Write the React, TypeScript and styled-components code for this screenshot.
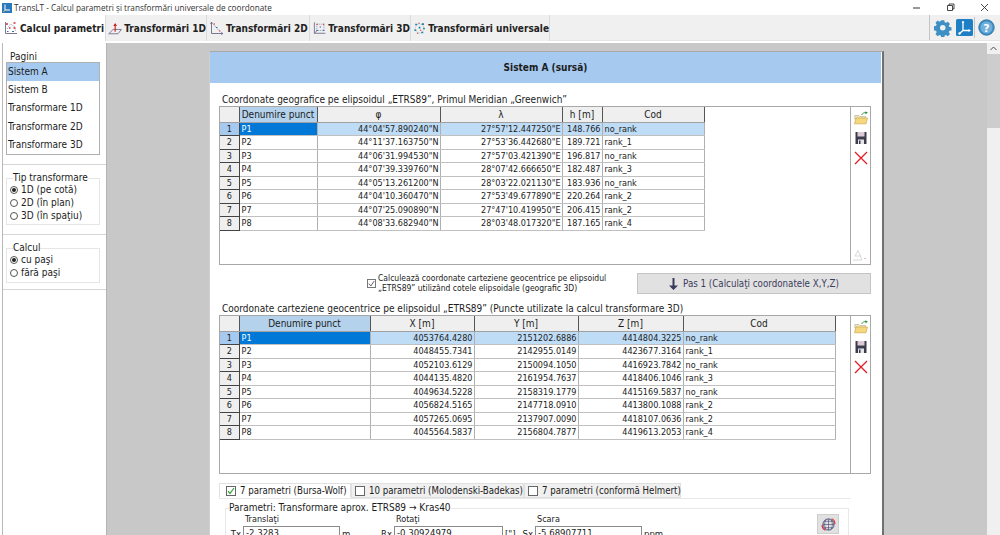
import React from "react";
import styled, { createGlobalStyle } from "styled-components";

const Global = createGlobalStyle`
  html, body { margin: 0; padding: 0; height: 535px; overflow: hidden; background: #fff; }
  #root { height: 535px; }
  * { box-sizing: border-box; }
  body { font-family: "DejaVu Sans Condensed", "DejaVu Sans", sans-serif; font-size: 10px; color: #1c1c1c; }
`;

const Window = styled.div`width: 1000px; height: 535px; display: flex; flex-direction: column; overflow: hidden;`;
const TitleBar = styled.div`height: 15px; flex: none; display: flex; align-items: center; padding-left: 2px; gap: 2px; background: #fff;`;
const TitleText = styled.span`font-family: "Open Sans", sans-serif; font-size: 8.2px; color: #333; flex: 1; white-space: nowrap;`;
const WinBtn = styled.span`width: 32px; height: 15px; display: flex; align-items: center; justify-content: center;`;
const Toolbar = styled.div`height: 26px; flex: none; display: flex; background: #f0f0f0; border-bottom: 1px solid #e4e4e4;`;
const Tab = styled.div<{ $active?: boolean; $w: number }>`
  width: ${p => p.$w}px; height: 26px; flex: none; display: flex; align-items: center; gap: 2px;
  padding-left: ${p => (p.$active ? 3 : 2)}px; white-space: nowrap; font-weight: 700; font-size: 10px; color: #222;
  background: ${p => (p.$active ? "#fff" : "#f0f0f0")}; border-right: 1px solid #dcdcdc;
`;
const ToolSpacer = styled.div`flex: 1;`;
const ToolIcons = styled.div`
  width: 71px; border-left: 1px solid #c4c4c4; display: flex; align-items: center; padding-left: 4px;
  & > svg:first-child { margin-right: 4px; }
`;
const ToolDivider = styled.span`width: 1px; height: 21px; margin: 0 3px 0 1px; background: #c4c4c4;`;
const Body = styled.div`flex: 1; display: flex; min-height: 0; border-top: 2px solid #fff;`;
const Sidebar = styled.aside`width: 107px; flex: none; padding-left: 2px; background: #fff; border-right: 1px solid #b4b4b4; display: flex;`;
const SideInner = styled.div`flex: 1; border-left: 1px solid #b8b8b8; display: flex; flex-direction: column;`;
const SideSection = styled.div<{ $h: number; $top: number }>`height: ${p => p.$h}px; padding: ${p => p.$top}px 6px 0 3px; border-bottom: 1px solid #d6d6d6;`;
const SideLegend = styled.div`padding-left: 4px; line-height: 11px; height: 11px; background: #fff;`;
const ListBox = styled.div`width: 94px; height: 93px; border: 1px solid #b0b0b0; display: flex; flex-direction: column;`;
const ListItem = styled.div<{ $sel?: boolean }>`height: 18.3px; line-height: 18px; padding-left: 1px; background: ${p => (p.$sel ? "#a6c9ef" : "#fff")};`;
const Field = styled.fieldset<{ $h: number }>`width: 94px; height: ${p => p.$h}px; margin: 0; padding: 0 0 0 3px; border: 1px solid #e6e6e6;`;
const FieldLegend = styled.legend`padding: 0; margin-left: 3px; line-height: 10px;`;
const RadioRow = styled.div`height: 13px; display: flex; align-items: center; gap: 3px; white-space: nowrap;`;
const Radio = styled.span<{ $on?: boolean }>`
  width: 8px; height: 8px; border-radius: 50%; border: 1px solid #555; background: #fff; display: flex; align-items: center; justify-content: center; flex: none;
  &::after { content: ""; width: 4px; height: 4px; border-radius: 50%; background: ${p => (p.$on ? "#222" : "transparent")}; }
`;
const Main = styled.main`flex: 1; background: #c8c8c8; padding: 8px 0 0 102px; overflow: hidden;`;
const Card = styled.div`width: 675px; height: 600px; background: #fff; border-top: 1px solid #a8a8a8; border-right: 2px solid #707070; border-left: 1px solid #d0d0d0;`;
const CardHead = styled.div`height: 31px; margin-right: 1px; background: #a6c9ef; display: flex; align-items: center; justify-content: center; font-weight: 700;`;
const CardBody = styled.div`padding: 11px 0 0 9px;`;
const SectionTitle = styled.div`height: 12px; line-height: 12px; padding-left: 3px; white-space: nowrap;`;
const GridBox = styled.div`width: 652px; height: 159px; border: 1px solid #a8a8a8; display: flex;`;
const GridArea = styled.div`width: 631px; border-right: 1px solid #a8a8a8;`;
const GridTools = styled.div`flex: 1; display: flex; flex-direction: column; align-items: center; padding-top: 4px; gap: 6px; position: relative;`;
const GhostIcon = styled.span`position: absolute; bottom: 0; left: 1px;`;
const Table = styled.table`border-collapse: collapse; table-layout: fixed;`;
const Th = styled.th<{ $w: number; $sel?: boolean }>`
  width: ${p => p.$w}px; height: 15px; padding: 0; font-weight: 400; text-align: center; font-size: 10px;
  background: ${p => (p.$sel ? "#b4d2ec" : "#efefef")}; border-right: 1px solid #555; border-bottom: 1px solid #a0a0a0;
`;
const RowHead = styled.td<{ $sel?: boolean }>`
  height: 13.5px; padding: 0; text-align: center; font-size: 9px; background: ${p => (p.$sel ? "#a6c9ef" : "#efefef")};
  border-right: 1px solid #444; border-bottom: 1px solid #444;
`;
const Td = styled.td<{ $right?: boolean; $sel?: boolean; $focus?: boolean }>`
  height: 13.5px; padding: ${p => (p.$right ? "0 1px 0 0" : "0 0 0 2px")}; text-align: ${p => (p.$right ? "right" : "left")}; font-size: 9px; white-space: nowrap; overflow: hidden;
  line-height: 12px; color: ${p => (p.$focus ? "#fff" : "#222")};
  background: ${p => (p.$focus ? "#0078d7" : p.$sel ? "#bedcf6" : "#fff")};
  border-right: 1px solid #b0b0b0; border-bottom: 1px solid #c0c0c0;
`;
const StepRow = styled.div`height: 38px; display: flex; padding-top: 8px; width: 652px;`;
const CheckWrap = styled.div`margin-left: 148px; width: 270px; display: flex; align-items: center; gap: 2px; height: 20px;`;
const Check = styled.span`width: 9px; height: 9px; border: 1px solid #777; flex: none; display: flex; align-items: center; justify-content: center; background: #fff;`;
const CheckLabel = styled.div`font-size: 8.5px; line-height: 10px; white-space: nowrap;`;
const StepBtn = styled.div`width: 234px; height: 21px; background: #e1e1e1; border: 1px solid #c4c4c4; display: flex; align-items: center; justify-content: center; gap: 5px; color: #3c3c5c; font-size: 9.7px;`;
const TabStrip = styled.div`display: flex; align-items: flex-end; height: 14px; margin-top: 10px; position: relative; z-index: 1;`;
const ParamTab = styled.div<{ $w: number; $active?: boolean }>`
  width: ${p => p.$w}px; height: 15px; display: flex; align-items: center; gap: 4px; padding-left: ${p => (p.$active ? 6 : 3)}px; white-space: nowrap; font-size: 9.6px;
  background: ${p => (p.$active ? "#fff" : "#f0f0f0")}; border: 1px solid #e0e0e0; ${p => p.$active && "border-bottom-color:#fff;"}
`;
const TabCheck = styled.span`width: 10px; height: 10px; border: 1px solid #666; background: #fff; display: flex; align-items: center; justify-content: center; flex: none;`;
const ParamPanel = styled.div`width: 632px; padding: 4px 0 0 6px; border-top: 1px solid #e8e8e8;`;
const ParamField = styled.fieldset`margin: 0; width: 624px; height: 60px; padding: 0; border: 1px solid #e8e8e8; position: relative;`;
const ParamLegend = styled.legend`margin-left: 3px; padding: 0; line-height: 10px;`;
const ParamCols = styled.div`display: grid; grid-template-columns: 150px 140px 1fr; padding-left: 5px;`;
const ParamCol = styled.div<{ $pad: number }>`padding-left: ${p => p.$pad}px;`;
const ParamCap = styled.div`font-size: 9px; line-height: 11px; height: 13px; padding-left: 2px; padding-top: 1px;`;
const ParamRow = styled.div`display: flex; align-items: center; gap: 2px; margin-left: -14px; white-space: nowrap; font-size: 9.5px;`;
const ParamInput = styled.div<{ $w: number }>`width: ${p => p.$w}px; height: 14px; border: 1px solid #8a8a8a; padding-left: 2px; line-height: 12px; background: #fff;`;
const ParamName = styled.span`width: 12px; text-align: right;`;
const GlobeBtn = styled.div`position: absolute; right: 9px; top: 1px; width: 22px; height: 20px; background: #e1e1e1; border: 1px solid #cfcfcf; display: flex; align-items: center; justify-content: center;`;
const Scroll = styled.div`width: 13px; flex: none; background: #f0f0f0; display: flex; flex-direction: column; align-items: center;`;
const ScrollArrow = styled.div`height: 11px; display: flex; align-items: center; justify-content: center;`;
const ScrollThumb = styled.div`width: 13px; height: 74px; background: #cdcdcd;`;

const CoordIcon = ({ kind }: { kind: number }) => (
  <svg width="15" height="15" viewBox="0 0 15 15" fill="none">
    {kind === 1 ? (
      <g>
        <path d="M.8 13h9.700l3.500-4.500H5.300z" stroke="#6a6a8a" strokeWidth=".9" />
        <path d="M7.500 11V2.500" stroke="#d02020" strokeWidth="1.200" />
        <path d="M5.500 5 7.500 2l2 3z" fill="#d02020" />
      </g>
    ) : kind === 4 ? (
      <g>
        <circle cx="7.500" cy="7.500" r="5" stroke="#9ab8c8" strokeWidth=".8" strokeDasharray="1.500 1" />
        <path d="M2.500 3h2.200M10 2.500h2.500M1.500 9.500h2.200M9.500 12h2.200M6.500 6.500h2M11.500 7.500h2" stroke="#1f7fa8" strokeWidth="1.800" />
        <path d="M6 1.500h1.500M4.500 13h1.500M8 9.500h1.500" stroke="#d03030" strokeWidth="1.200" />
      </g>
    ) : kind === 0 ? (
      <g>
        <path d="M2.500 1v11.500H14" stroke="#6a6a8a" strokeWidth=".9" />
        <path d="M4 8 7.500 3l4 2.500 1 4.500" stroke="#8a90b8" strokeWidth=".8" strokeDasharray="1.300 .8" />
        <path d="M3 3h2M6 7h1.500M10.500 2h2M10.500 7h2" stroke="#d83030" strokeWidth="1.300" />
        <path d="M4 10.500h1.500M9 10.500h2" stroke="#3a6ab0" strokeWidth="1.100" />
      </g>
    ) : kind === 2 ? (
      <g>
        <path d="M2.500 1v11.500H14" stroke="#6a6a8a" strokeWidth=".9" />
        <path d="M1.400 3 2.500 1l1.100 2M12 11.400l2 1.100-2 1.100" stroke="#6a6a8a" strokeWidth=".7" />
        <path d="M4.500 3.500 10.500 10" stroke="#8a90b8" strokeWidth=".8" strokeDasharray="1.300 .8" />
        <path d="M4.500 3h1.500M10 10h1.500" stroke="#d83030" strokeWidth="1.200" />
        <path d="M7 6.500h1.500" stroke="#3a6ab0" strokeWidth="1.100" />
      </g>
    ) : (
      <g>
        <path d="M2.500 1v11.500H14M2.500 12.500 5.500 9.500" stroke="#6a6a8a" strokeWidth=".9" />
        <path d="M5 3h7.500v6.500H5z" stroke="#8a90b8" strokeWidth=".8" strokeDasharray="1.300 .8" />
        <path d="M4.500 3h1.500M11.500 3h1.500" stroke="#d83030" strokeWidth="1.200" />
        <path d="M4.500 9.500h1.500M11.500 9.500h1.500M8 6h1.500" stroke="#3a6ab0" strokeWidth="1.100" />
      </g>
    )}
  </svg>
);

const OpenIcon = () => (
  <svg width="14" height="14" viewBox="0 0 14 14">
    <path d="M.8 4.500h4.200l1 1h5.500v2.500H.8z" fill="#e8e4c8" stroke="#b0a060" strokeWidth=".5" />
    <path d="M.5 12.800 2 7h11.500l-1.500 5.800z" fill="#f5d77e" stroke="#c9a040" strokeWidth=".6" />
    <path d="M7.500 4c1.300-2 3-2.800 4.500-2.300" fill="none" stroke="#2f8a3a" strokeWidth=".9" />
    <path d="M11.500 .3l2.300 1.500-2.300 1.400z" fill="#1e8a2e" />
  </svg>
);
const SaveIcon = () => (
  <svg width="14" height="14" viewBox="0 0 14 14">
    <path d="M1.500 1h11v12h-11z" fill="#3c3c4c" />
    <rect x="3.500" y="1" width="7" height="4.500" fill="#dccbd6" />
    <rect x="4" y="8.500" width="6" height="4.500" fill="#e6e6ea" />
    <rect x="5" y="9.500" width="1.500" height="3.500" fill="#3c3c4c" />
  </svg>
);
const DeleteIcon = () => (
  <svg width="14" height="14" viewBox="0 0 14 14">
    <path d="M1 1 13 13M13 1 1 13" stroke="#e01c24" strokeWidth="1.300" />
  </svg>
);

const geo = [
  ["P1", "44°04'57.890240\"N", "27°57'12.447250\"E", "148.766", "no_rank"],
  ["P2", "44°11'37.163750\"N", "27°53'36.442680\"E", "189.721", "rank_1"],
  ["P3", "44°06'31.994530\"N", "27°57'03.421390\"E", "196.817", "no_rank"],
  ["P4", "44°07'39.339760\"N", "28°07'42.666650\"E", "182.487", "rank_3"],
  ["P5", "44°05'13.261200\"N", "28°03'22.021130\"E", "183.936", "no_rank"],
  ["P6", "44°04'10.360470\"N", "27°53'49.677890\"E", "220.264", "rank_2"],
  ["P7", "44°07'25.090890\"N", "27°47'10.419950\"E", "206.415", "rank_2"],
  ["P8", "44°08'33.682940\"N", "28°03'48.017320\"E", "187.165", "rank_4"],
];
const xyz = [
  ["P1", "4053764.4280", "2151202.6886", "4414804.3225", "no_rank"],
  ["P2", "4048455.7341", "2142955.0149", "4423677.3164", "rank_1"],
  ["P3", "4052103.6129", "2150094.1050", "4416923.7842", "no_rank"],
  ["P4", "4044135.4820", "2161954.7637", "4418406.1046", "rank_3"],
  ["P5", "4049634.5228", "2158319.1779", "4415169.5837", "no_rank"],
  ["P6", "4056824.5165", "2147718.0910", "4413800.1088", "rank_2"],
  ["P7", "4057265.0695", "2137907.0090", "4418107.0636", "rank_2"],
  ["P8", "4045564.5837", "2156804.7877", "4419613.2053", "rank_4"],
];

const DataGrid = ({ cols, rows }: { cols: { t: string; w: number }[]; rows: string[][] }) => (
  <Table>
    <thead>
      <tr>
        <Th $w={19} />
        {cols.map((c, i) => (
          <Th key={c.t} $w={c.w} $sel={i === 0}>{c.t}</Th>
        ))}
      </tr>
    </thead>
    <tbody>
      {rows.map((r, ri) => (
        <tr key={r[0]}>
          <RowHead $sel={ri === 0}>{ri + 1}</RowHead>
          {r.map((v, ci) => (
            <Td key={ci} $right={ci > 0 && ci < r.length - 1} $sel={ri === 0} $focus={ri === 0 && ci === 0}>{v}</Td>
          ))}
        </tr>
      ))}
    </tbody>
  </Table>
);

const Tools = ({ ghost }: { ghost?: boolean }) => (
  <GridTools>
    <OpenIcon />
    <SaveIcon />
    <DeleteIcon />
    {ghost && (
      <GhostIcon>
        <svg width="16" height="14" viewBox="0 0 16 14" fill="none">
          <path d="M1 12h9L6 2.500 3 8h6" stroke="#cfcfcf" strokeWidth=".8" />
          <path d="M12.500 10.500h1" stroke="#d08080" strokeWidth="1" />
        </svg>
      </GhostIcon>
    )}
  </GridTools>
);

const TabCheckMark = () => (
  <svg width="8" height="8" viewBox="0 0 8 8" fill="none"><path d="M1 4.200 3 6.500 7 1" stroke="#2f9e3a" strokeWidth="1.200" /></svg>
);

export default function App() {
  return (
    <Window>
      <Global />
      <TitleBar>
        <svg width="10" height="10" viewBox="0 0 10 10">
          <rect width="10" height="10" fill="#2a78bc" />
          <path d="M3 1.500v5.500h5" stroke="#fff" strokeWidth="1" fill="none" />
          <path d="M3 7 1.500 9" stroke="#f0c040" strokeWidth="1" />
        </svg>
        <TitleText>TransLT - Calcul parametri și transformări universale de coordonate</TitleText>
        <WinBtn><svg width="8" height="8"><path d="M1 4h7" stroke="#333" strokeWidth="1" /></svg></WinBtn>
        <WinBtn><svg width="9" height="9" fill="none"><path d="M1.500 2.500h5v5h-5zM3 2.500V1h5v5H6.500" stroke="#333" strokeWidth=".9" /></svg></WinBtn>
        <WinBtn><svg width="9" height="9"><path d="M1 1l7 7M8 1l-7 7" stroke="#333" strokeWidth=".9" /></svg></WinBtn>
      </TitleBar>
      <Toolbar>
        <Tab $active $w={106}><CoordIcon kind={0} />Calcul parametri</Tab>
        <Tab $w={101}><CoordIcon kind={1} />Transformări 1D</Tab>
        <Tab $w={103}><CoordIcon kind={2} />Transformări 2D</Tab>
        <Tab $w={101}><CoordIcon kind={3} />Transformări 3D</Tab>
        <Tab $w={139}><CoordIcon kind={4} />Transformări universale</Tab>
        <ToolSpacer />
        <ToolIcons>
          <svg width="18" height="18" viewBox="0 0 18 18">
            <path fill="#3d8fc4" fillRule="evenodd" d="M7.300.8h3.400l.4 2.300 1.500.6 1.900-1.300 2.400 2.400-1.300 1.900.6 1.500 2.300.4v3.400l-2.300.4-.6 1.500 1.300 1.900-2.400 2.400-1.900-1.300-1.500.6-.4 2.300H7.300l-.4-2.300-1.500-.6-1.900 1.300-2.400-2.400 1.300-1.900-.6-1.500-2.300-.4V7.300l2.300-.4.600-1.500L1.100 3.500l2.400-2.400 1.900 1.300 1.500-.6zM9 6a3 3 0 1 0 0 6 3 3 0 0 0 0-6z" transform="scale(.92) translate(.5 .5)" />
          </svg>
          <svg width="17" height="17" viewBox="0 0 17 17">
            <rect width="17" height="17" rx="1.500" fill="#1f7fc4" />
            <path d="M7 2v9.500h6.500M7 11.500 3.500 14.500" stroke="#fff" strokeWidth="1.300" fill="none" />
            <path d="M5.700 4 7 2l1.300 2zM12.500 10l2.500 1.500-2.500 1.500z" fill="#fff" />
            <circle cx="3.500" cy="14.500" r="1.200" fill="#fff" />
          </svg>
          <ToolDivider />
          <svg width="17" height="17" viewBox="0 0 17 17">
            <circle cx="8.500" cy="8.500" r="7.700" fill="#3f90c8" stroke="#2a6f9e" strokeWidth=".9" />
            <circle cx="8.500" cy="8.500" r="6" fill="#6fb0dc" />
            <text x="8.500" y="12.500" textAnchor="middle" fontSize="11" fontWeight="700" fill="#fff" fontFamily="DejaVu Sans">?</text>
          </svg>
        </ToolIcons>
      </Toolbar>
      <Body>
        <Sidebar>
          <SideInner>
            <SideSection $h={122} $top={8}>
              <SideLegend>Pagini</SideLegend>
              <ListBox>
                <ListItem $sel>Sistem A</ListItem>
                <ListItem>Sistem B</ListItem>
                <ListItem>Transformare 1D</ListItem>
                <ListItem>Transformare 2D</ListItem>
                <ListItem>Transformare 3D</ListItem>
              </ListBox>
            </SideSection>
            <SideSection $h={70} $top={8}>
              <Field $h={52}>
                <FieldLegend>Tip transformare</FieldLegend>
                <RadioRow><Radio $on />1D (pe cotă)</RadioRow>
                <RadioRow><Radio />2D (în plan)</RadioRow>
                <RadioRow><Radio />3D (în spaţiu)</RadioRow>
              </Field>
            </SideSection>
            <SideSection $h={55} $top={8}>
              <Field $h={40}>
                <FieldLegend>Calcul</FieldLegend>
                <RadioRow><Radio $on />cu paşi</RadioRow>
                <RadioRow><Radio />fără paşi</RadioRow>
              </Field>
            </SideSection>
          </SideInner>
        </Sidebar>
        <Main>
          <Card>
            <CardHead>Sistem A (sursă)</CardHead>
            <CardBody>
              <SectionTitle>Coordonate geografice pe elipsoidul „ETRS89”, Primul Meridian „Greenwich”</SectionTitle>
              <GridBox>
                <GridArea>
                  <DataGrid
                    cols={[
                      { t: "Denumire punct", w: 78 },
                      { t: "φ", w: 123 },
                      { t: "λ", w: 122 },
                      { t: "h [m]", w: 40 },
                      { t: "Cod", w: 102 },
                    ]}
                    rows={geo}
                  />
                </GridArea>
                <Tools ghost />
              </GridBox>
              <StepRow>
                <CheckWrap>
                  <Check><svg width="7" height="7" viewBox="0 0 7 7" fill="none"><path d="M.8 3.500 2.800 6 6.200 1" stroke="#555" strokeWidth=".9" /></svg></Check>
                  <CheckLabel>Calculează coordonate carteziene geocentrice pe elipsoidul<br />„ETRS89” utilizând cotele elipsoidale (geografic 3D)</CheckLabel>
                </CheckWrap>
                <StepBtn>
                  <svg width="9" height="12" viewBox="0 0 9 12"><path d="M3.500 0h2v7.500H9L4.500 12 0 7.500h3.500z" fill="#3a3a5a" /></svg>
                  Pas 1 (Calculaţi coordonatele X,Y,Z)
                </StepBtn>
              </StepRow>
              <SectionTitle>Coordonate carteziene geocentrice pe elipsoidul „ETRS89” (Puncte utilizate la calcul transformare 3D)</SectionTitle>
              <GridBox>
                <GridArea>
                  <DataGrid
                    cols={[
                      { t: "Denumire punct", w: 131 },
                      { t: "X [m]", w: 104 },
                      { t: "Y [m]", w: 104 },
                      { t: "Z [m]", w: 105 },
                      { t: "Cod", w: 152 },
                    ]}
                    rows={xyz}
                  />
                </GridArea>
                <Tools />
              </GridBox>
              <TabStrip>
                <ParamTab $active $w={132}><TabCheck><TabCheckMark /></TabCheck>7 parametri (Bursa-Wolf)</ParamTab>
                <ParamTab $w={173}><TabCheck />10 parametri (Molodenski-Badekas)</ParamTab>
                <ParamTab $w={157}><TabCheck />7 parametri (conformă Helmert)</ParamTab>
              </TabStrip>
              <ParamPanel>
                <ParamField>
                  <ParamLegend>Parametri: Transformare aprox. ETRS89 → Kras40</ParamLegend>
                  <ParamCols>
                    <ParamCol $pad={12}>
                      <ParamCap>Translaţi</ParamCap>
                      <ParamRow><ParamName>Tx</ParamName><ParamInput $w={97}>-2.3283</ParamInput>m</ParamRow>
                    </ParamCol>
                    <ParamCol $pad={13}>
                      <ParamCap>Rotaţi</ParamCap>
                      <ParamRow><ParamName>Rx</ParamName><ParamInput $w={109}>-0.30924979</ParamInput>["]</ParamRow>
                    </ParamCol>
                    <ParamCol $pad={14}>
                      <ParamCap>Scara</ParamCap>
                      <ParamRow><ParamName>Sx</ParamName><ParamInput $w={107}>-5.68907711</ParamInput>ppm</ParamRow>
                    </ParamCol>
                  </ParamCols>
                  <GlobeBtn>
                    <svg width="15" height="15" viewBox="0 0 14 14" fill="none">
                      <circle cx="7" cy="7" r="5.200" stroke="#4a4a7a" strokeWidth=".9" />
                      <path d="M1.800 7h10.400M7 1.800v10.400M3 4h8M3 10h8M4.500 2.500c-1.500 3-1.500 6 0 9M9.500 2.500c1.500 3 1.500 6 0 9" stroke="#4a4a7a" strokeWidth=".6" />
                      <path d="M10 1.500c2 1 3 3 3 5M4 12.500c-2-1-3-3-3-5" stroke="#e02020" strokeWidth="1" />
                    </svg>
                  </GlobeBtn>
                </ParamField>
              </ParamPanel>
            </CardBody>
          </Card>
        </Main>
        <Scroll>
          <ScrollArrow><svg width="7" height="5"><path d="M.5 4 3.500 1l3 3" stroke="#505050" fill="none" /></svg></ScrollArrow>
          <ScrollThumb />
        </Scroll>
      </Body>
    </Window>
  );
}
